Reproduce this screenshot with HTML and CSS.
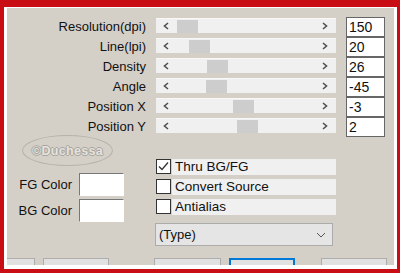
FILE: index.html
```html
<!DOCTYPE html>
<html>
  <head>
  <meta charset="utf-8">
  <title>Halftone</title>
  <link rel="stylesheet" href="styles.css">
  </head>
  <body>

<div class="frame">
<div class="panel">

  <div class="sliders">
    <div class="lbl">Resolution(dpi)</div>
    <div class="track"><span class="arr l"><svg width="6" height="8" viewBox="0 0 6 8"><path d="M5 1 L1.5 4 L5 7" fill="none" stroke="#505050" stroke-width="1.6"/></svg></span><span class="thumb" style="left:21px"></span><span class="arr r"><svg width="6" height="8" viewBox="0 0 6 8"><path d="M1 1 L4.5 4 L1 7" fill="none" stroke="#505050" stroke-width="1.6"/></svg></span></div>
    <div class="val">150</div>

    <div class="lbl">Line(lpi)</div>
    <div class="track"><span class="arr l"><svg width="6" height="8" viewBox="0 0 6 8"><path d="M5 1 L1.5 4 L5 7" fill="none" stroke="#505050" stroke-width="1.6"/></svg></span><span class="thumb" style="left:33px"></span><span class="arr r"><svg width="6" height="8" viewBox="0 0 6 8"><path d="M1 1 L4.5 4 L1 7" fill="none" stroke="#505050" stroke-width="1.6"/></svg></span></div>
    <div class="val">20</div>

    <div class="lbl">Density</div>
    <div class="track"><span class="arr l"><svg width="6" height="8" viewBox="0 0 6 8"><path d="M5 1 L1.5 4 L5 7" fill="none" stroke="#505050" stroke-width="1.6"/></svg></span><span class="thumb" style="left:51px"></span><span class="arr r"><svg width="6" height="8" viewBox="0 0 6 8"><path d="M1 1 L4.5 4 L1 7" fill="none" stroke="#505050" stroke-width="1.6"/></svg></span></div>
    <div class="val">26</div>

    <div class="lbl">Angle</div>
    <div class="track"><span class="arr l"><svg width="6" height="8" viewBox="0 0 6 8"><path d="M5 1 L1.5 4 L5 7" fill="none" stroke="#505050" stroke-width="1.6"/></svg></span><span class="thumb" style="left:50px"></span><span class="arr r"><svg width="6" height="8" viewBox="0 0 6 8"><path d="M1 1 L4.5 4 L1 7" fill="none" stroke="#505050" stroke-width="1.6"/></svg></span></div>
    <div class="val">-45</div>

    <div class="lbl">Position X</div>
    <div class="track"><span class="arr l"><svg width="6" height="8" viewBox="0 0 6 8"><path d="M5 1 L1.5 4 L5 7" fill="none" stroke="#505050" stroke-width="1.6"/></svg></span><span class="thumb" style="left:77px"></span><span class="arr r"><svg width="6" height="8" viewBox="0 0 6 8"><path d="M1 1 L4.5 4 L1 7" fill="none" stroke="#505050" stroke-width="1.6"/></svg></span></div>
    <div class="val">-3</div>

    <div class="lbl">Position Y</div>
    <div class="track"><span class="arr l"><svg width="6" height="8" viewBox="0 0 6 8"><path d="M5 1 L1.5 4 L5 7" fill="none" stroke="#505050" stroke-width="1.6"/></svg></span><span class="thumb" style="left:81px"></span><span class="arr r"><svg width="6" height="8" viewBox="0 0 6 8"><path d="M1 1 L4.5 4 L1 7" fill="none" stroke="#505050" stroke-width="1.6"/></svg></span></div>
    <div class="val">2</div>
  </div>

  <div class="lower">
    <div class="left">
      <div class="logo"><span>&copy;Duchessa</span></div>
      <div class="color fg"><span>FG Color</span><div class="swatch"></div></div>
      <div class="color bg"><span>BG Color</span><div class="swatch"></div></div>
    </div>
    <div class="right">
      <div class="check"><span class="box"><svg width="13" height="13" viewBox="0 0 13 13"><path d="M2 6.5 L5 9.5 L11 2.5" fill="none" stroke="#333" stroke-width="1.3"/></svg></span><span class="strip">Thru BG/FG</span></div>
      <div class="check"><span class="box"></span><span class="strip">Convert Source</span></div>
      <div class="check"><span class="box"></span><span class="strip">Antialias</span></div>
      <div class="select"><span>(Type)</span><svg width="10" height="6" viewBox="0 0 10 6"><path d="M1 1 L5 5 L9 1" fill="none" stroke="#555" stroke-width="1"/></svg></div>
    </div>
  </div>

  <div class="buttons">
    <div class="btn b1"></div>
    <div class="btn b2"></div>
    <div class="btn b3"></div>
    <div class="btn b4 active"></div>
    <div class="btn b5"></div>
  </div>

</div>
</div>

  </body>
</html>
```

FILE: styles.css
```css
body {margin:0; background:#c80d15; font:13px "Liberation Sans", Arial, sans-serif; color:#111;}
.frame {width:400px; height:273px; box-sizing:border-box; border-style:solid; border-color:#c80d15; border-width:7px 3px 4px 4px;}
.panel {height:257px; background:#d4d0c8; border-style:solid; border-color:#fff; border-width:1px 3px 4px 3px; overflow:hidden;}

.sliders {display:grid; grid-template-columns:139px 180px 39px; grid-auto-rows:20px; column-gap:10px; padding-top:9px;}
.lbl {text-align:right; line-height:20px; white-space:nowrap;}
.track {position:relative; height:15px; margin-top:1px; background:#f0f0f0; border-top:1px solid #f8f8f8; box-sizing:border-box;}
.thumb {position:absolute; top:1px; width:21px; height:13px; background:#cdcdcd;}
.arr {position:absolute; top:3px; line-height:0;}
.arr.l {left:7px;}
.arr.r {right:8px;}
.val {background:#fff; border:1px solid #666; line-height:18px; padding-left:2px; font-size:14px;}

.lower {display:grid; grid-template-columns:148px 181px;}
.logo {margin:-2px 0 0 15px; width:91px; height:31px; box-sizing:border-box; border:1px solid #b6b2ac; border-radius:50%; text-align:center; line-height:29px;}
.logo span {font-weight:bold; font-size:12.5px; letter-spacing:0.3px; color:#e6e3de; text-shadow:-1px 0 0 #a8a49e, 1px 0 0 #a8a49e, 0 -1px 0 #a8a49e, 0 1px 0 #a8a49e;}
.color {display:flex; align-items:center; gap:7px;}
.color span {width:65px; text-align:right;}
.color.fg {margin-top:7px;}
.color.bg {margin-top:3px;}
.swatch {width:45px; height:23px; box-sizing:border-box; background:#fff; border:1px solid #fff; border-top-color:#777; border-left-color:#777;}

.right {padding-top:22px;}
.check {display:flex; height:16px; margin-bottom:4px; gap:1px;}
.box {width:15px; height:15px; margin-left:1px; box-sizing:border-box; border:1px solid #333; background:#fff; line-height:0;}
.strip {flex:1; background:#f0f0f0; line-height:16px; padding-left:3px; font-size:13.5px;}
.select {display:flex; justify-content:space-between; align-items:center; width:178px; height:23px; margin-top:8px; box-sizing:border-box; background:#e5e5e5; border:1px solid #acacac; padding:0 6px 0 3px;}

.buttons {display:flex; margin-top:12px;}
.btn {height:23px; box-sizing:border-box; background:#e1e1e1; border:1px solid #adadad;}
.btn.b1 {width:38px; margin-left:-10px;}
.btn.b2 {width:66px; margin-left:8px;}
.btn.b3 {width:67px; margin-left:45px;}
.btn.b4 {width:66px; margin-left:8px;}
.btn.b5 {width:66px; margin-left:26px;}
.btn.active {border:2px solid #0078d7;}
```
